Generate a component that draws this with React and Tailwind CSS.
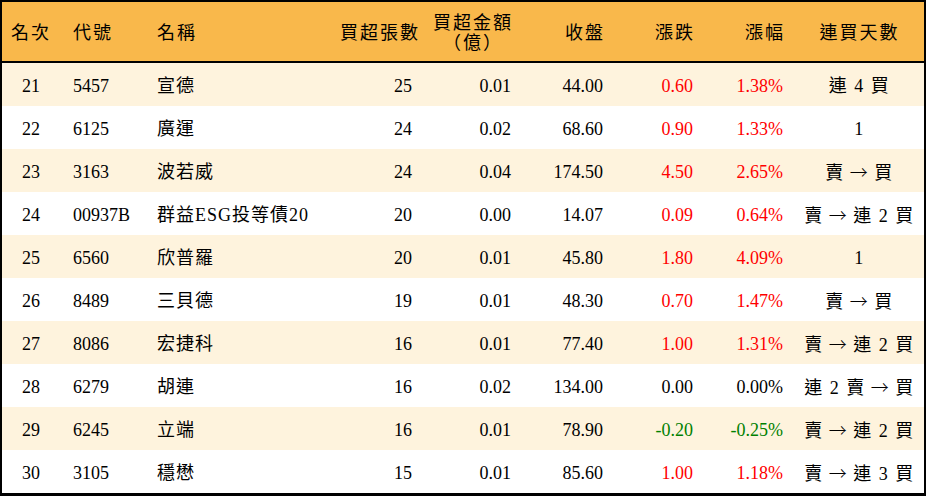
const rows = [
  { rank: 21, code: "5457", name: "宣德", vol: 25, amt: "0.01", close: "44.00", chg: "0.60", pct: "1.38%", streak: ["連 4 買"] },
  { rank: 22, code: "6125", name: "廣運", vol: 24, amt: "0.02", close: "68.60", chg: "0.90", pct: "1.33%", streak: ["1"] },
  { rank: 23, code: "3163", name: "波若威", vol: 24, amt: "0.04", close: "174.50", chg: "4.50", pct: "2.65%", streak: ["賣", "買"] },
  { rank: 24, code: "00937B", name: "群益ESG投等債20", vol: 20, amt: "0.00", close: "14.07", chg: "0.09", pct: "0.64%", streak: ["賣", "連 2 買"] },
  { rank: 25, code: "6560", name: "欣普羅", vol: 20, amt: "0.01", close: "45.80", chg: "1.80", pct: "4.09%", streak: ["1"] },
  { rank: 26, code: "8489", name: "三貝德", vol: 19, amt: "0.01", close: "48.30", chg: "0.70", pct: "1.47%", streak: ["賣", "買"] },
  { rank: 27, code: "8086", name: "宏捷科", vol: 16, amt: "0.01", close: "77.40", chg: "1.00", pct: "1.31%", streak: ["賣", "連 2 買"] },
  { rank: 28, code: "6279", name: "胡連", vol: 16, amt: "0.02", close: "134.00", chg: "0.00", pct: "0.00%", streak: ["連 2 賣", "買"] },
  { rank: 29, code: "6245", name: "立端", vol: 16, amt: "0.01", close: "78.90", chg: "-0.20", pct: "-0.25%", streak: ["賣", "連 2 買"] },
  { rank: 30, code: "3105", name: "穩懋", vol: 15, amt: "0.01", close: "85.60", chg: "1.00", pct: "1.18%", streak: ["賣", "連 3 買"] },
];

const cols = "grid grid-cols-[58px_84px_196px_84px_99px_92px_90px_90px_129px]";

function tone(v) {
  const n = parseFloat(v);
  if (n > 0) return "text-[#ff0000]";
  if (n < 0) return "text-[#008000]";
  return "text-black";
}

function Streak({ parts }) {
  return (
    <span className="whitespace-nowrap tracking-[1.5px]">
      {parts.map((p, i) => (
        <span key={i}>
          {i > 0 && (
            <span className="mx-[5px] font-['Noto_Sans_CJK_TC',sans-serif] font-light">→</span>
          )}
          {p}
        </span>
      ))}
    </span>
  );
}

export default function App() {
  return (
    <div className="h-[496px] w-[926px] bg-white font-['Liberation_Serif','Noto_Sans_CJK_TC',serif] text-[18px] text-black">
      <div className="h-[496px] border-2 border-b-[3px] border-black">
        {/* header */}
        <div className={`${cols} h-[61px] items-center whitespace-nowrap border-b-2 border-black bg-[#f9b84b] pt-[3px] tracking-[2px]`}>
          <div className="text-center">名次</div>
          <div className="pl-[13px]">代號</div>
          <div className="pl-[13px]">名稱</div>
          <div className="pr-[10px] text-right">買超張數</div>
          <div className="flex justify-end pr-[10px]">
            <div className="flex flex-col items-center leading-[20px]">
              <span>買超金額</span>
              <span>（億）</span>
            </div>
          </div>
          <div className="pr-[10px] text-right">收盤</div>
          <div className="pr-[10px] text-right">漲跌</div>
          <div className="pr-[10px] text-right">漲幅</div>
          <div className="text-center">連買天數</div>
        </div>

        {rows.map((r, i) => (
          <div
            key={r.rank}
            className={`${cols} h-[43px] items-center pt-[3px] ${i % 2 === 0 ? "bg-[#fef3dd]" : "bg-white"}`}
          >
            <div className="text-center">{r.rank}</div>
            <div className="pl-[13px]">{r.code}</div>
            <div className="whitespace-nowrap pl-[13px] tracking-[1px]">{r.name}</div>
            <div className="pr-[12px] text-right">{r.vol}</div>
            <div className="pr-[12px] text-right">{r.amt}</div>
            <div className="pr-[12px] text-right">{r.close}</div>
            <div className={`pr-[12px] text-right ${tone(r.chg)}`}>{r.chg}</div>
            <div className={`pr-[12px] text-right ${tone(r.pct)}`}>{r.pct}</div>
            <div className="text-center">
              <Streak parts={r.streak} />
            </div>
          </div>
        ))}
      </div>
    </div>
  );
}
